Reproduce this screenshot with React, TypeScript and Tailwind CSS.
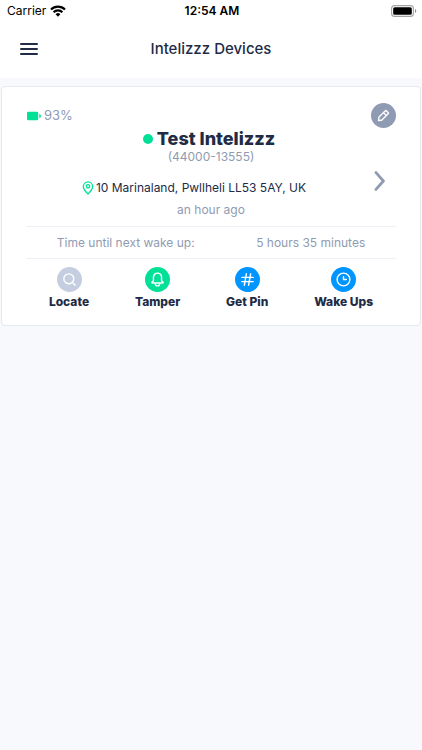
import type { ReactNode } from 'react';

const device = {
  name: 'Test Intelizzz',
  pin: '44000-13555',
  battery: 93,
  address: '10 Marinaland, Pwllheli LL53 5AY, UK',
  lastSeen: 'an hour ago',
  nextWakeUp: '5 hours 35 minutes',
};

const icons = {
  search:
    'M20.71 19.29l-3.4-3.39A7.92 7.92 0 0 0 19 11a8 8 0 1 0-8 8 7.92 7.92 0 0 0 4.9-1.69l3.39 3.4a1 1 0 0 0 1.42 0 1 1 0 0 0 0-1.42zM5 11a6 6 0 1 1 6 6 6 6 0 0 1-6-6z',
  bell: 'M20.52 15.21l-1.8-1.81V8.94a6.86 6.86 0 0 0-5.82-6.88 6.74 6.74 0 0 0-7.62 6.67v4.67l-1.8 1.81A1.64 1.64 0 0 0 4.64 18H8v.34A3.84 3.84 0 0 0 12 22a3.84 3.84 0 0 0 4-3.66V18h3.36a1.64 1.64 0 0 0 1.16-2.79zM14 18.34A1.88 1.88 0 0 1 12 20a1.88 1.88 0 0 1-2-1.66V18h4zM5.51 16l1.18-1.18a2 2 0 0 0 .59-1.42V8.73A4.73 4.73 0 0 1 8.9 5.17 4.67 4.67 0 0 1 12.64 4a4.86 4.86 0 0 1 4.08 4.9v4.5a2 2 0 0 0 .58 1.42L18.49 16z',
  hash: 'M20 14h-4.3l.73-4H20a1 1 0 0 0 0-2h-3.21l.69-3.81A1 1 0 0 0 16.64 3a1 1 0 0 0-1.22.82L14.67 8h-3.88l.69-3.81A1 1 0 0 0 10.64 3a1 1 0 0 0-1.22.82L8.67 8H4a1 1 0 0 0 0 2h4.3l-.73 4H4a1 1 0 0 0 0 2h3.21l-.69 3.81A1 1 0 0 0 7.36 21a1 1 0 0 0 1.22-.82L9.33 16h3.88l-.69 3.81a1 1 0 0 0 .84 1.19 1 1 0 0 0 1.22-.82l.75-4.18H20a1 1 0 0 0 0-2zM9.6 14l.73-4h3.87l-.73 4z',
  clock:
    'M12 2a10 10 0 1 0 10 10A10 10 0 0 0 12 2zm0 18a8 8 0 1 1 8-8 8 8 0 0 1-8 8zM16 11h-3V8a1 1 0 0 0-2 0v4a1 1 0 0 0 1 1h4a1 1 0 0 0 0-2z',
  pin: 'M12 2a8 8 0 0 0-8 7.92c0 5.48 7.05 11.58 7.35 11.84a1 1 0 0 0 1.3 0C13 21.5 20 15.4 20 9.92A8 8 0 0 0 12 2zm0 17.65c-1.67-1.59-6-6-6-9.73a6 6 0 0 1 12 0c0 3.7-4.33 8.14-6 9.73zM12 6a3.5 3.5 0 1 0 3.5 3.5A3.5 3.5 0 0 0 12 6zm0 5a1.5 1.5 0 1 1 1.5-1.5A1.5 1.5 0 0 1 12 11z',
  edit: 'M19.4 7.34L16.66 4.6A2 2 0 0 0 14 4.53l-9 9a2 2 0 0 0-.57 1.21L4 18.91a1 1 0 0 0 .29.8A1 1 0 0 0 5 20h.09l4.17-.38a2 2 0 0 0 1.21-.57l9-9a1.92 1.92 0 0 0-.07-2.71zM9.08 17.62l-3 .28.27-3L12 9.32l2.7 2.7zM16 10.68L13.32 8l1.95-2L18 8.73z',
};

function Icon({ name, className }: { name: keyof typeof icons; className: string }) {
  return (
    <svg viewBox="0 0 24 24" fill="currentColor" className={className} aria-hidden="true">
      <path d={icons[name]} />
    </svg>
  );
}

function StatusBar() {
  return (
    <div className="grid grid-cols-3 items-center h-[22px] pl-[7px] pr-[5px] text-xs text-black">
      <div className="flex items-center gap-1">
        <span>Carrier</span>
        <svg viewBox="0 0 16 12" className="w-4 h-3" aria-hidden="true">
          <g fill="none" stroke="currentColor" strokeWidth="2.2">
            <path d="M1 4.5a10 10 0 0 1 14 0" />
            <path d="M3.6 7.3a6.2 6.2 0 0 1 8.8 0" />
          </g>
          <path d="M8 11.8L5.6 9.3a3.4 3.4 0 0 1 4.8 0z" fill="currentColor" />
        </svg>
      </div>
      <span className="text-center font-semibold">12:54 AM</span>
      <svg viewBox="0 0 26 12" className="w-[26px] h-3 justify-self-end" aria-hidden="true">
        <rect x="0.6" y="0.6" width="21.8" height="10.8" rx="3" fill="none" stroke="#a3a3a3" strokeWidth="1.1" />
        <rect x="2.2" y="2.2" width="18.6" height="7.6" rx="1.6" fill="currentColor" />
        <path d="M24 4v4a2.2 2.2 0 0 0 0-4z" fill="#8c8c8c" />
      </svg>
    </div>
  );
}

function Header() {
  return (
    <header className="pb-[2px] bg-white">
      <StatusBar />
      <div className="grid grid-cols-[40px_1fr_40px] items-center h-[54px] px-[9px]">
        <button type="button" aria-label="Menu" className="flex justify-center items-center h-10">
          <svg viewBox="0 0 18 14" className="w-[18px] h-[14px]" aria-hidden="true">
            <path d="M1 2h16M1 7h16M1 12h16" stroke="#222b45" strokeWidth="2" strokeLinecap="round" />
          </svg>
        </button>
        <h1 className="text-center text-[15px] font-medium">Intelizzz Devices</h1>
      </div>
    </header>
  );
}

function Action({ label, color, children }: { label: string; color: string; children: ReactNode }) {
  return (
    <button type="button" className="flex flex-col items-center gap-[2px] text-xs leading-4 font-extrabold">
      <span className={`flex items-center justify-center size-[25px] rounded-full text-white ${color}`}>
        {children}
      </span>
      {label}
    </button>
  );
}

function DeviceCard() {
  return (
    <article className="mx-px mt-2 px-6 pt-4 pb-[15px] bg-white border border-[#e4e9f2] rounded">
      <div className="flex items-center justify-between">
        <div className="flex items-center gap-[3px] text-[13px] text-[#8f9bb3]">
          <svg viewBox="0 0 15 10" className="w-[15px] h-[10px]" aria-hidden="true">
            <rect x="1" y="0.8" width="11.2" height="8.4" rx="1.3" fill="#00e096" />
            <path d="M13.2 3.3h.7a.9.9 0 0 1 .9.9v1.6a.9.9 0 0 1-.9.9h-.7z" fill="#00e096" />
          </svg>
          {device.battery}%
        </div>
        <button
          type="button"
          aria-label="Edit device"
          className="flex items-center justify-center size-[25px] rounded-full bg-[#8f9bb3] text-white"
        >
          <Icon name="edit" className="size-[17px]" />
        </button>
      </div>

      <div className="grid grid-cols-[32px_1fr_32px] items-center pb-2">
        <div className="col-start-2 flex flex-col items-center">
          <h2 className="flex items-center gap-1 pr-1 text-lg leading-[22px] font-extrabold">
            <span className="size-[10px] rounded-full bg-[#00e096]" />
            {device.name}
          </h2>
          <p className="text-xs leading-[14px] text-[#8f9bb3]">({device.pin})</p>
          <p className="flex items-center mt-4 pr-9 text-xs leading-4">
            <Icon name="pin" className="size-4 text-[#00e096]" />
            {device.address}
          </p>
          <p className="mt-[6px] text-xs leading-4 text-[#8f9bb3]">{device.lastSeen}</p>
        </div>
        <button type="button" aria-label="Open device" className="flex justify-center pt-4">
          <svg viewBox="0 0 12 20" className="w-3 h-5" aria-hidden="true">
            <path
              d="M2 1.6L9.4 10 2 18.4"
              fill="none"
              stroke="#8f9bb3"
              strokeWidth="2.8"
              strokeLinecap="round"
              strokeLinejoin="round"
            />
          </svg>
        </button>
      </div>

      <div className="flex justify-around py-2 border-y border-[#edf1f7] text-xs leading-[15px] text-[#8f9bb3]">
        <span>Time until next wake up:</span>
        <span>{device.nextWakeUp}</span>
      </div>

      <div className="flex justify-around pt-2">
        <Action label="Locate" color="bg-[#c5cee0]">
          <Icon name="search" className="size-[17px]" />
        </Action>
        <Action label="Tamper" color="bg-[#00e096]">
          <Icon name="bell" className="size-[17px]" />
        </Action>
        <Action label="Get Pin" color="bg-[#0095ff]">
          <Icon name="hash" className="size-[17px]" />
        </Action>
        <Action label="Wake Ups" color="bg-[#0095ff]">
          <Icon name="clock" className="size-[17px]" />
        </Action>
      </div>
    </article>
  );
}

export default function App() {
  return (
    <div className="min-h-screen bg-[#f7f9fc] font-['Inter',sans-serif] text-[#222b45]">
      <Header />
      <main>
        <DeviceCard />
      </main>
    </div>
  );
}
